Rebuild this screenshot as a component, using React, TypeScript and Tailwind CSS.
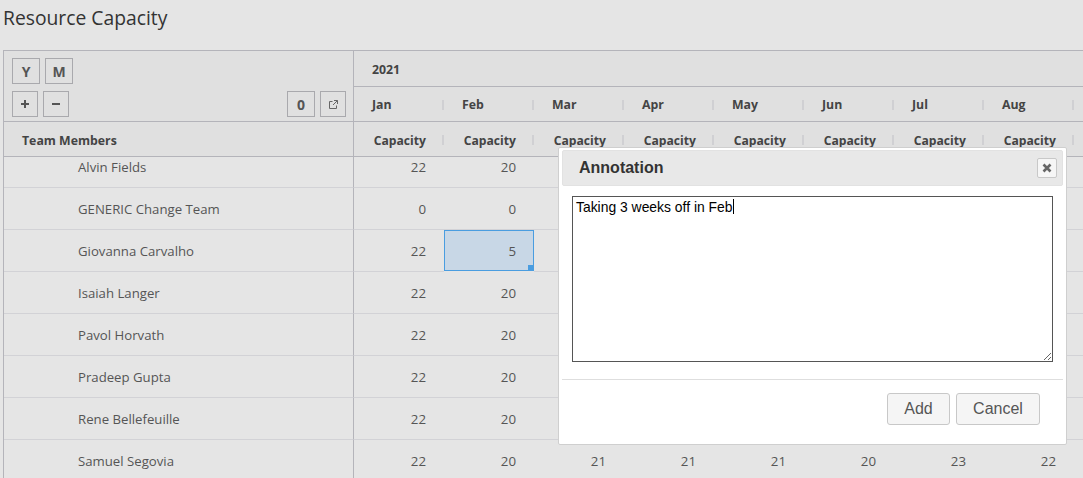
import React from 'react';

const months = ['Jan', 'Feb', 'Mar', 'Apr', 'May', 'Jun', 'Jul', 'Aug'];

const rows: { name: string; values: number[] }[] = [
  { name: 'Alvin Fields', values: [22, 20, 21, 21, 21, 20, 23, 22] },
  { name: 'GENERIC Change Team', values: [0, 0, 0, 0, 0, 0, 0, 0] },
  { name: 'Giovanna Carvalho', values: [22, 5, 21, 21, 21, 20, 23, 22] },
  { name: 'Isaiah Langer', values: [22, 20, 21, 21, 21, 20, 23, 22] },
  { name: 'Pavol Horvath', values: [22, 20, 21, 21, 21, 20, 23, 22] },
  { name: 'Pradeep Gupta', values: [22, 20, 21, 21, 21, 20, 23, 22] },
  { name: 'Rene Bellefeuille', values: [22, 20, 21, 21, 21, 20, 23, 22] },
  { name: 'Samuel Segovia', values: [22, 20, 21, 21, 21, 20, 23, 22] },
];

const ToolButton: React.FC<{ children: React.ReactNode; wide?: boolean }> = ({ children, wide }) => (
  <button className={`h-[26px] ${wide ? 'w-[28px]' : 'w-[26px]'} flex items-center justify-center border border-[#a9a9ad] text-[14px] font-bold text-[#555]`}>
    {children}
  </button>
);

const Divider = () => <span className="absolute right-0 top-[13px] h-[10px] w-[2px] bg-[#d0d0d3]" />;

const App: React.FC = () => {
  return (
    <div className="relative h-[478px] w-[1083px] overflow-hidden bg-[#e5e5e5] font-['Open_Sans',sans-serif] text-[13.2px] text-[#444]">
      <h1 className="h-[50px] pl-[3px] pt-[5px] text-[19.3px] leading-[26px] font-normal text-[#333]">Resource Capacity</h1>

      <div className="ml-[3px] border-l border-[#b4b4ba]">
        {/* frozen header */}
        <div className="flex h-[107px] border-b border-t border-[#b4b4ba] bg-[#e0e0e0]">
          <div className="flex w-[350px] shrink-0 flex-col border-r border-[#b4b4ba]">
            <div className="h-[71px] border-b border-[#b4b4ba] pl-[8px] pr-[7px] pt-[7px]">
              <div className="flex gap-[5px]">
                <ToolButton wide>Y</ToolButton>
                <ToolButton wide>M</ToolButton>
              </div>
              <div className="mt-[7px] flex items-center gap-[5px]">
                <ToolButton>
                  <svg width="8" height="8" viewBox="0 0 8 8" stroke="#555" strokeWidth="2">
                    <path d="M4 0v8M0 4h8" />
                  </svg>
                </ToolButton>
                <ToolButton>
                  <svg width="8" height="8" viewBox="0 0 8 8" stroke="#555" strokeWidth="2">
                    <path d="M0 4h8" />
                  </svg>
                </ToolButton>
                <div className="ml-auto flex gap-[5px]">
                  <ToolButton wide>0</ToolButton>
                  <ToolButton>
                    <svg width="9" height="9" viewBox="0 0 9 9" fill="none" stroke="#666" strokeWidth="1">
                      <path d="M3.5 1.5H.5v7h7V5.5" />
                      <path d="M5 .5h3.5V4M8.5 .5 4 5" />
                    </svg>
                  </ToolButton>
                </div>
              </div>
            </div>
            <div className="flex flex-1 items-center pl-[18px] pt-[4px] font-bold text-[12.3px]">Team Members</div>
          </div>
          <div className="flex-1">
            <div className="flex h-[36px] items-center border-b border-[#b4b4ba] pl-[18px] pt-[3px] text-[12.3px] font-bold">2021</div>
            <div className="flex h-[35px] border-b border-[#b4b4ba]">
              {months.map((m) => (
                <div key={m} className="relative flex h-[35px] w-[90px] shrink-0 items-center pl-[18px] pt-[1px] text-[12.3px] font-bold">
                  {m}
                  <Divider />
                </div>
              ))}
            </div>
            <div className="flex h-[34px]">
              {months.map((m) => (
                <div key={m} className="relative flex h-[34px] w-[90px] shrink-0 items-center justify-end pr-[18px] pt-[4px] text-[12.15px] font-bold">
                  Capacity
                  <Divider />
                </div>
              ))}
            </div>
          </div>
        </div>

        {/* scrolled body */}
        <div className="h-[321px] overflow-hidden">
          <div className="-mt-[11px]">
            {rows.map((row) => (
              <div key={row.name} className="flex h-[42px]">
                <div className="flex w-[350px] shrink-0 items-center border-b border-r border-[#d2d2d6] border-r-[#b4b4ba] pl-[74px] pt-[3px] text-[#555]">
                  {row.name}
                </div>
                {row.values.map((v, i) => {
                  const selected = row.name === 'Giovanna Carvalho' && i === 1;
                  return (
                    <div
                      key={i}
                      className={`relative flex w-[90px] shrink-0 items-center justify-end pt-[2px] text-[13.3px] text-[#555] ${
                        selected ? 'mb-[1px] border border-[#4a9de0] bg-[#c8d7e6] pr-[17px]' : 'border-b border-[#d2d2d6] pr-[18px]'
                      }`}
                    >
                      {v}
                      {selected && <span className="absolute bottom-0 right-0 h-[5px] w-[5px] bg-[#4a9de0]" />}
                    </div>
                  );
                })}
                <div className="flex-1 border-b border-[#d2d2d6]" />
              </div>
            ))}
          </div>
        </div>
      </div>

      {/* annotation dialog */}
      <div className="absolute left-[558px] top-[147px] h-[298px] w-[509px] rounded-[2px] border border-[#cfcfcf] bg-white px-[3px] pt-[2px] font-['Liberation_Sans',sans-serif]">
        <div className="flex h-[36px] items-center justify-between rounded-[2px] border border-[#e2e2e2] bg-[#e8e8e8] pl-[16px] pr-[5px]">
          <span className="text-[16px] font-bold text-[#333]">Annotation</span>
          <button className="flex h-[20px] w-[20px] items-center justify-center rounded-[2px] border border-[#c8c8c8] bg-[#f6f6f6]">
            <svg width="10" height="10" viewBox="0 0 10 10" stroke="#666" strokeWidth="2.6">
              <path d="M1.5 1.5l7 7M8.5 1.5l-7 7" />
            </svg>
          </button>
        </div>
        <div className="relative px-[10px] pt-[10px]">
          <textarea
            defaultValue="Taking 3 weeks off in Feb"
            className="block h-[166px] w-[481px] border border-[#555] px-[3px] py-[2px] text-[13.9px] leading-[16px] text-black outline-none"
          />
          <span className="absolute left-[171px] top-[13px] h-[15px] w-[1px] bg-black" />
        </div>
        <div className="mt-[17px] h-[1px] bg-[#dedede]" />
        <div className="flex justify-end gap-[6px] pr-[23px] pt-[13px]">
          <button className="h-[32px] w-[63px] rounded-[3px] border border-[#c8c8c8] bg-[#f5f5f5] text-[16px] text-[#555]">Add</button>
          <button className="h-[32px] w-[84px] rounded-[3px] border border-[#c8c8c8] bg-[#f5f5f5] text-[16px] text-[#555]">Cancel</button>
        </div>
      </div>
    </div>
  );
};

export default App;
